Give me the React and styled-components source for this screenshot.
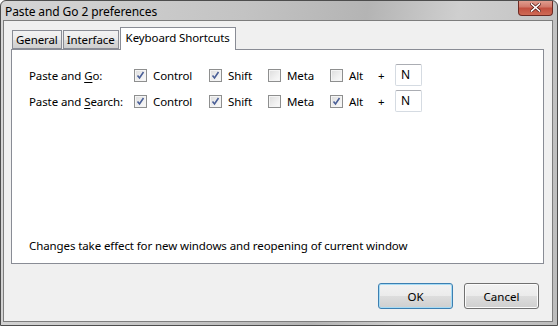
import React, { useState } from 'react'
import styled, { createGlobalStyle } from 'styled-components'

const GlobalStyle = createGlobalStyle`
  html, body {
    margin: 0;
    padding: 0;
    background: #ffffff;
  }
  body {
    font-family: 'Noto Sans', 'Open Sans', sans-serif;
    font-size: 11.5px;
    letter-spacing: -0.1px;
    color: #000;
  }
`

const Window = styled.div`
  width: 558px;
  height: 326px;
  box-sizing: border-box;
  border: 1px solid #4d4d4d;
  border-radius: 6px 6px 0 0;
  background: linear-gradient(100deg, #d6d6d6 0%, #c3c3c3 40%, #b4b4b4 60%, #cfcfcf 75%, #bcbcbc 100%);
  display: flex;
  flex-direction: column;
  overflow: hidden;
`

const TitleBar = styled.div`
  height: 19px;
  display: flex;
  align-items: flex-start;
  padding-left: 4px;
  padding-right: 4px;
`

const Title = styled.div`
  font-size: 12px;
  line-height: 19px;
  color: #000;
  padding-top: 1px;
`

const CloseButton = styled.div`
  margin-left: auto;
  margin-top: -1px;
  width: 35px;
  height: 16px;
  box-sizing: border-box;
  border: 1px solid #6d2a23;
  border-top: none;
  border-radius: 0 0 4px 4px;
  background: linear-gradient(#e3a394 0%, #d27a6b 45%, #c2503f 55%, #cf6a55 100%);
  display: flex;
  align-items: center;
  justify-content: center;
`

const Client = styled.div`
  flex: 1;
  margin: 0 4px 3px 2px;
  border: 1px solid #7d7d7d;
  background: #f0f0f0;
  display: flex;
  flex-direction: column;
  padding: 6px 8px 0 7px;
`

const TabStrip = styled.div`
  display: flex;
  align-items: flex-end;
  gap: 1px;
  height: 22px;
  position: relative;
  z-index: 1;
`

const Tab = styled.div`
  box-sizing: border-box;
  height: ${(p) => (p.active ? '23px' : '19px')};
  margin-bottom: ${(p) => (p.active ? '-1px' : '0')};
  margin-left: ${(p) => (p.first ? '1px' : '0')};
  padding: 0 ${(p) => (p.active ? '5px' : '3px')};
  border: 1px solid #898c95;
  border-bottom: ${(p) => (p.active ? 'none' : '1px solid #898c95')};
  background: ${(p) =>
    p.active ? '#ffffff' : 'linear-gradient(#f2f2f2 0%, #ebebeb 50%, #dddddd 51%, #cfcfcf 100%)'};
  line-height: ${(p) => (p.active ? '20px' : '17px')};
  white-space: nowrap;
`

const Panel = styled.div`
  height: 215px;
  box-sizing: border-box;
  border: 1px solid #898c95;
  background: #ffffff;
  display: flex;
  flex-direction: column;
  padding: 14px 17px 10px 17px;
`

const ShortcutGrid = styled.div`
  display: grid;
  grid-template-columns: 105px 75px 59px 62px 48px 17px 27px;
  grid-auto-rows: 22px;
  row-gap: 4px;
  align-items: center;
`

const RowLabel = styled.div`
  white-space: nowrap;
`

const Underlined = styled.span`
  text-decoration: underline;
  text-underline-offset: 2px;
`

const CheckItem = styled.label`
  display: flex;
  align-items: center;
  gap: 6px;
  white-space: nowrap;
`

const Box = styled.span`
  width: 13px;
  height: 13px;
  box-sizing: border-box;
  border: 1px solid #8e8f8f;
  background: linear-gradient(135deg, #dcdcdc 0%, #f0f0f0 60%, #fbfbfb 100%);
  box-shadow: inset 0 0 0 1px #f4f4f4;
  display: flex;
  align-items: center;
  justify-content: center;
  flex: none;
`

const Plus = styled.div`
  text-align: left;
`

const KeyBox = styled.div`
  width: 27px;
  height: 22px;
  box-sizing: border-box;
  border: 1px solid #d5dbe2;
  border-top-color: #abadb3;
  border-radius: 2px;
  background: #fff;
  padding-left: 5px;
  line-height: 19px;
  font-size: 12px;
`

const Note = styled.div`
  margin-top: auto;
  white-space: nowrap;
`

const Footer = styled.div`
  display: flex;
  justify-content: flex-end;
  gap: 11px;
  padding: 19px 5px 0 0;
`

const Button = styled.button`
  width: 75px;
  height: 26px;
  box-sizing: border-box;
  border: 1px solid ${(p) => (p.primary ? '#3c7fb1' : '#707070')};
  border-radius: 3px;
  background: linear-gradient(#f2f2f2 0%, #ebebeb 50%, #dddddd 51%, #cfcfcf 100%);
  box-shadow: ${(p) => (p.primary ? 'inset 0 0 0 1px #a6dbf5' : 'inset 0 0 0 1px #fbfbfb')};
  font-family: 'Noto Sans', 'Open Sans', sans-serif;
  font-size: 11.5px;
  color: #000;
  padding: 0;
`

function CheckMark() {
  return (
    <svg width="9" height="9" viewBox="0 0 9 9">
      <path d="M1.5 4.5 L3.5 7 L7.5 1" fill="none" stroke="#4a5f97" strokeWidth="1.6" />
    </svg>
  )
}

function CloseGlyph() {
  return (
    <svg width="11" height="9" viewBox="0 0 11 9">
      <path d="M1.5 1 L9.5 8 M9.5 1 L1.5 8" stroke="#5a1e18" strokeWidth="3" strokeLinecap="square" />
      <path d="M1.5 1 L9.5 8 M9.5 1 L1.5 8" stroke="#ffffff" strokeWidth="1.6" strokeLinecap="square" />
    </svg>
  )
}

function Check({ label, checked }) {
  return (
    <CheckItem>
      <Box>{checked && <CheckMark />}</Box>
      {label}
    </CheckItem>
  )
}

const shortcuts = [
  { name: 'Paste and ', key: 'G', rest: 'o:', mods: [true, true, false, false], letter: 'N' },
  { name: 'Paste and ', key: 'S', rest: 'earch:', mods: [true, true, false, true], letter: 'N' },
]

const modNames = ['Control', 'Shift', 'Meta', 'Alt']

export default function App() {
  const [tab] = useState('keys')

  return (
    <>
      <GlobalStyle />
      <Window>
        <TitleBar>
          <Title>Paste and Go 2 preferences</Title>
          <CloseButton>
            <CloseGlyph />
          </CloseButton>
        </TitleBar>
        <Client>
          <TabStrip>
            <Tab first>General</Tab>
            <Tab>Interface</Tab>
            <Tab active={tab === 'keys'}>Keyboard Shortcuts</Tab>
          </TabStrip>
          <Panel>
            <ShortcutGrid>
              {shortcuts.map((s) => (
                <React.Fragment key={s.key}>
                  <RowLabel>
                    {s.name}
                    <Underlined>{s.key}</Underlined>
                    {s.rest}
                  </RowLabel>
                  {modNames.map((m, i) => (
                    <Check key={m} label={m} checked={s.mods[i]} />
                  ))}
                  <Plus>+</Plus>
                  <KeyBox>{s.letter}</KeyBox>
                </React.Fragment>
              ))}
            </ShortcutGrid>
            <Note>Changes take effect for new windows and reopening of current window</Note>
          </Panel>
          <Footer>
            <Button primary>OK</Button>
            <Button>Cancel</Button>
          </Footer>
        </Client>
      </Window>
    </>
  )
}
